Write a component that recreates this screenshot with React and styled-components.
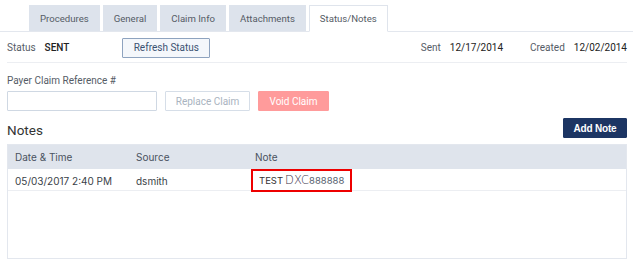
import React from "react";
import styled, { createGlobalStyle } from "styled-components";

const GlobalStyle = createGlobalStyle`
  body {
    margin: 0;
    background: #ffffff;
    font-family: Roboto, "Noto Sans", sans-serif;
    font-size: 10px;
    color: #333;
  }
`;

const Page = styled.div`
  width: 633px;
  height: 264px;
  overflow: hidden;
`;

const TabBar = styled.div`
  display: flex;
  gap: 3px;
  padding: 5px 0 0 29px;
  border-bottom: 1px solid #e3e7ee;
  height: 26px;
`;

const Tab = styled.div`
  display: flex;
  align-items: center;
  padding: 0 10px;
  font-size: 9.6px;
  color: #555c66;
  background: ${(p) => (p.$active ? "#ffffff" : "#dde3ec")};
  border: 1px solid ${(p) => (p.$active ? "#dfe4ec" : "#dde3ec")};
  border-bottom: ${(p) => (p.$active ? "1px solid #fff" : "none")};
  margin-bottom: -1px;
  box-sizing: border-box;
  height: ${(p) => (p.$active ? 27 : 26)}px;
`;

const Body = styled.div`
  padding: 0 6px 0 7px;
`;

const StatusRow = styled.div`
  display: flex;
  align-items: center;
  height: 29px;
  margin-top: 1px;
  border-bottom: 1px solid #eceef2;
`;

const Label = styled.span`
  color: #555c66;
  margin-right: ${(p) => p.$gap || 0}px;
  margin-left: ${(p) => p.$lead || 0}px;
`;

const Value = styled.span`
  color: #222;
  font-weight: ${(p) => (p.$bold ? 500 : 400)};
`;

const Spacer = styled.div`
  flex: ${(p) => (p.$w ? `0 0 ${p.$w}px` : 1)};
`;

const Button = styled.button`
  font-family: Roboto, "Noto Sans", sans-serif;
  font-size: 10px;
  height: 20px;
  width: ${(p) => p.$w}px;
  padding: 0;
  border-radius: 1px;
  box-sizing: border-box;
  cursor: pointer;
  ${(p) =>
    p.$variant === "outline" &&
    `
    background: #f4f7fb;
    border: 1px solid #8ea3bf;
    color: #3b5272;
  `}
  ${(p) =>
    p.$variant === "disabled" &&
    `
    background: #ffffff;
    border: 1px solid #d6dee8;
    color: #a9b3c0;
  `}
  ${(p) =>
    p.$variant === "danger" &&
    `
    background: #ff9b9b;
    border: 1px solid #ff9b9b;
    color: #ffffff;
  `}
  ${(p) =>
    p.$variant === "primary" &&
    `
    background: #1c3563;
    border: 1px solid #1c3563;
    color: #ffffff;
    font-family: "Liberation Sans", Arial, sans-serif;
    font-weight: 700;
    letter-spacing: -0.2px;
  `}
`;

const RefSection = styled.div`
  padding-top: 12px;
`;

const FieldLabel = styled.div`
  color: #555c66;
  margin-bottom: 5px;
`;

const FieldRow = styled.div`
  display: flex;
  gap: 8px;
`;

const Input = styled.input`
  width: 150px;
  height: 20px;
  box-sizing: border-box;
  border: 1px solid #cfd8e3;
  border-radius: 1px;
`;

const NotesHeader = styled.div`
  display: flex;
  align-items: center;
  justify-content: space-between;
  margin-top: 7px;
  height: 20px;
`;

const NotesTitle = styled.div`
  font-size: 13.5px;
  color: #333;
  padding-top: 4px;
`;

const Table = styled.div`
  margin-top: 6px;
  border: 1px solid #e3e7ee;
  height: 115px;
  box-sizing: border-box;
  font-family: Inter, "Noto Sans", sans-serif;
  font-size: 10px;
`;

const Row = styled.div`
  display: grid;
  grid-template-columns: 121px 119px 1fr;
  align-items: center;
  height: ${(p) => (p.$head ? 24 : 21)}px;
  background: ${(p) => (p.$head ? "#dfe4ec" : "#ffffff")};
  border-bottom: ${(p) => (p.$head ? "none" : "1px solid #eceef2")};
  padding-left: 7px;
  color: ${(p) => (p.$head ? "#4a5260" : "#3a3f48")};
`;

const Highlight = styled.span`
  display: inline-block;
  border: 2px solid #ee0000;
  padding: 2px 6px 2px 6px;
  margin-left: -4px;
  line-height: 14px;
  color: #333;
  font-size: 9.5px;
`;

const Dxc = styled.span`
  font-family: "DejaVu Sans", sans-serif;
  font-size: 11.5px;
  font-weight: 300;
  color: #3a2f48;
  margin-left: 2px;
`;

const Digits = styled.span`
  color: #55606e;
`;

const tabs = ["Procedures", "General", "Claim Info", "Attachments", "Status/Notes"];

export default function App() {
  return (
    <Page>
      <GlobalStyle />
      <TabBar>
        {tabs.map((t) => (
          <Tab key={t} $active={t === "Status/Notes"}>
            {t}
          </Tab>
        ))}
      </TabBar>
      <Body>
        <StatusRow>
          <Label $gap={9}>Status</Label>
          <Value $bold>SENT</Value>
          <Spacer $w={53} />
          <Button $variant="outline" $w={88}>
            Refresh Status
          </Button>
          <Spacer />
          <Label $gap={9}>Sent</Label>
          <Value>12/17/2014</Value>
          <Label $lead={27} $gap={9}>
            Created
          </Label>
          <Value>12/02/2014</Value>
        </StatusRow>
        <RefSection>
          <FieldLabel>Payer Claim Reference #</FieldLabel>
          <FieldRow>
            <Input />
            <Button $variant="disabled" $w={85}>
              Replace Claim
            </Button>
            <Button $variant="danger" $w={71}>
              Void Claim
            </Button>
          </FieldRow>
        </RefSection>
        <NotesHeader>
          <NotesTitle>Notes</NotesTitle>
          <Button $variant="primary" $w={64}>
            Add Note
          </Button>
        </NotesHeader>
        <Table>
          <Row $head>
            <span>Date &amp; Time</span>
            <span>Source</span>
            <span>Note</span>
          </Row>
          <Row>
            <span>05/03/2017 2:40 PM</span>
            <span>dsmith</span>
            <span>
              <Highlight>
                TEST<Dxc>DXC</Dxc>
                <Digits>888888</Digits>
              </Highlight>
            </span>
          </Row>
        </Table>
      </Body>
    </Page>
  );
}
